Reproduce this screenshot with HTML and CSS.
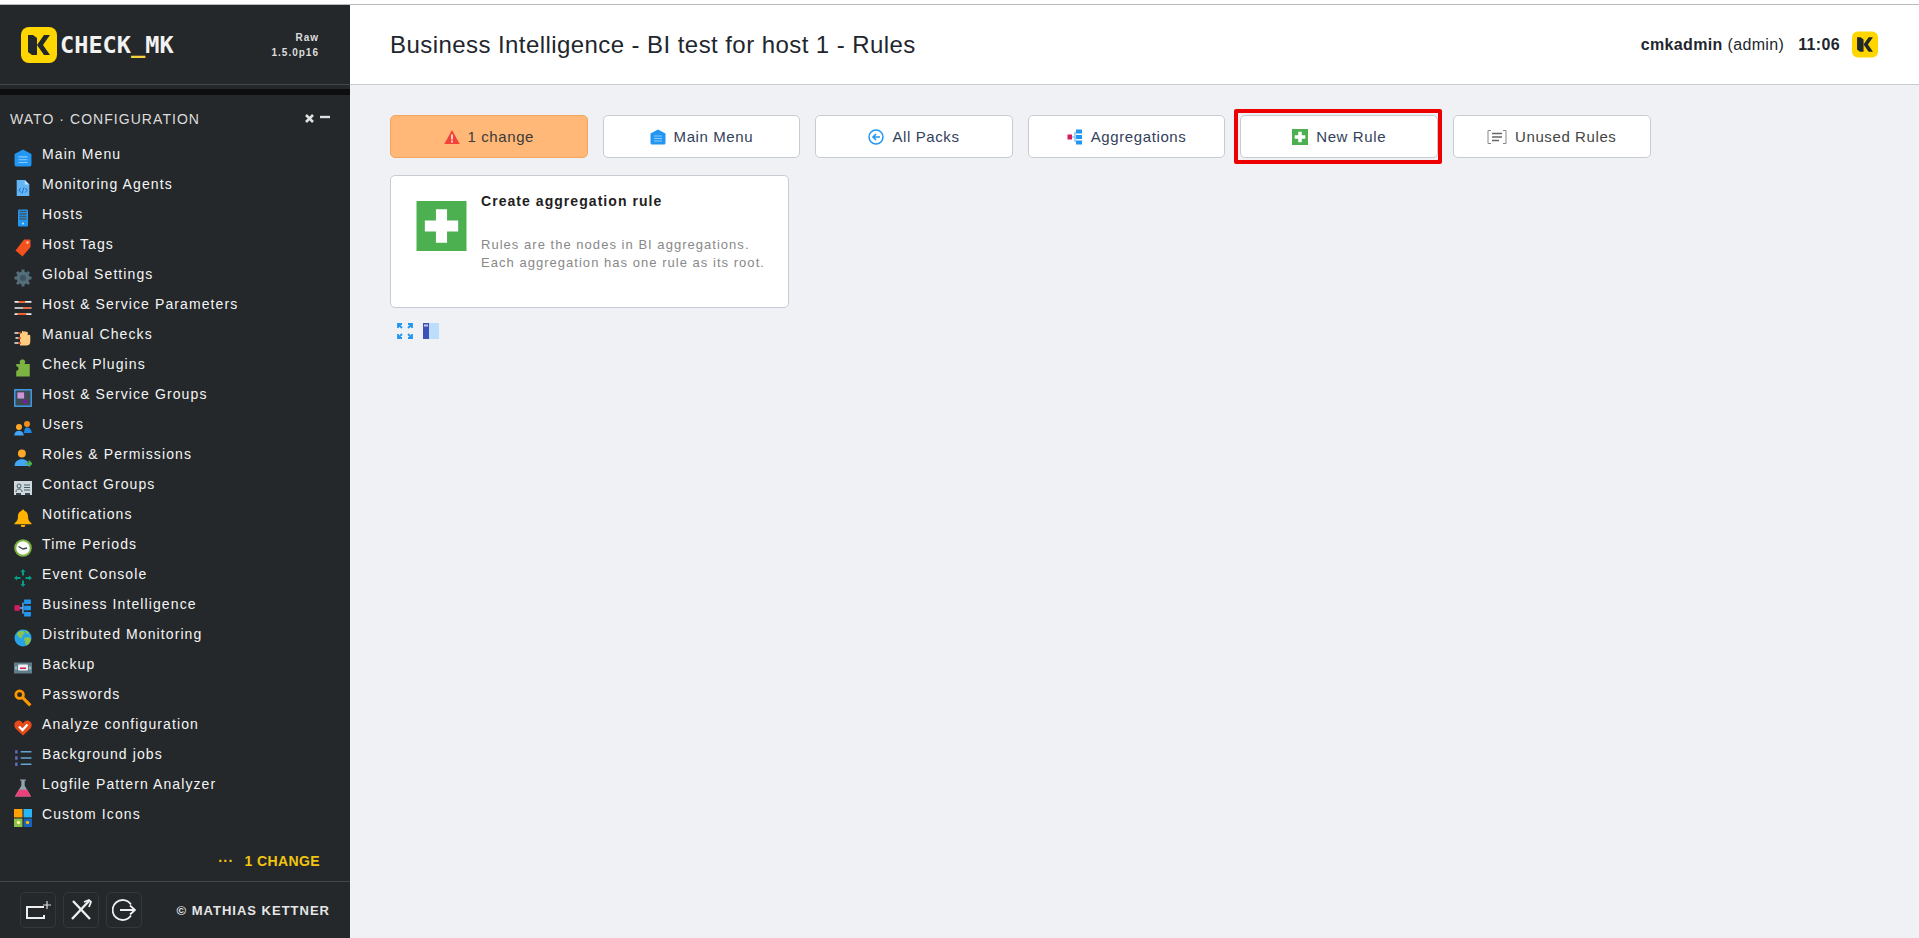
FILE: index.html
```html
<!DOCTYPE html>
<html lang="en">
<head>
    <meta charset="UTF-8">
    <title>Business Intelligence - BI test for host 1 - Rules</title>
    <link rel="stylesheet" href="styles.css">
</head>
<body>
    <svg class="sprite" xmlns="http://www.w3.org/2000/svg">
        <symbol id="i-logo" viewBox="0 0 36 36">
            <rect width="36" height="36" rx="8" fill="#ffd600"/>
            <path d="M7 8h5l4 3v17h-5l-4-3z" fill="#23282a"/>
            <path d="M29 8h-6l-7 10 7 10h6l-7-10z" fill="#23282a"/>
        </symbol>
        <symbol id="i-home" viewBox="0 0 16 16">
            <path d="M8 0.500L15.500 4.500V14a1.500 1.500 0 0 1-1.500 1.500H2A1.500 1.500 0 0 1 .5 14V4.500z" fill="#2196f3"/>
            <path d="M4 7h8M4 9.500h8M4 12h8" stroke="#90caf9" stroke-width="1"/>
        </symbol>
        <symbol id="i-agents" viewBox="0 0 16 20">
            <path d="M1 1h9l5 5v13H1z" fill="#64b5f6"/>
            <path d="M10 1l5 5h-5z" fill="#bbdefb"/>
            <path d="M5.500 10L3.500 12.500L5.500 15M10.500 10l2 2.500l-2 2.500M9 9.500l-2 6.500" stroke="#1565c0" fill="none"/>
        </symbol>
        <symbol id="i-host" viewBox="0 0 12 18">
            <rect x="1" y="0.500" width="10" height="17" rx="1" fill="#2196f3"/>
            <path d="M2.500 2.500h7M2.500 5h7M2.500 7.500h7M2.500 10h7" stroke="#455a64" stroke-width="1.400"/>
            <circle cx="6" cy="14.500" r="0.900" fill="#e3f2fd"/>
        </symbol>
        <symbol id="i-tag" viewBox="0 0 16 18">
            <path d="M9 0.500h5.500a1 1 0 0 1 1 1V8L7.500 17.500 0.500 11.500z" fill="#f4511e"/>
            <circle cx="12.500" cy="3.500" r="1.200" fill="#ffccbc"/>
        </symbol>
        <symbol id="i-gear" viewBox="0 0 18 18">
            <path d="M9 4.500a4.500 4.500 0 1 0 0 9a4.500 4.500 0 1 0 0-9z" fill="none" stroke="#546e7a" stroke-width="4"/>
            <path d="M9 0.500v17M0.500 9h17M3 3l12 12M15 3L3 15" stroke="#546e7a" stroke-width="3"/>
            <circle cx="9" cy="9" r="3" fill="#3e5560"/>
        </symbol>
        <symbol id="i-params" viewBox="0 0 16 16">
            <path d="M0.500 2.500h15M0.500 8h15M0.500 13.500h15" stroke="#eceff1" stroke-width="1.500"/>
            <path d="M4 2.500h6M8 8h7M3 13.500h8" stroke="#f4511e" stroke-width="1.500"/>
        </symbol>
        <symbol id="i-hand" viewBox="0 0 18 16">
            <path d="M6 15.500V3.500a1 1 0 0 1 1.800 0V2a1 1 0 0 1 2 0a1 1 0 0 1 2 0.500a1 1 0 0 1 2 0.500v3a1.200 1.200 0 0 1 2.500 0v5.500c0 3-1.800 4-4 4z" fill="#ffcc80"/>
            <path d="M0.500 3h5M1.500 8h4M0.500 13h5" stroke="#eceff1" stroke-width="1.500"/>
            <path d="M4 3h3M4 8h3M4 13h3" stroke="#e64a19" stroke-width="1.500"/>
        </symbol>
        <symbol id="i-plugin" viewBox="0 0 14 16">
            <path d="M1 15.500V10.500a2 2 0 0 0 0-4V4.500h3.700C3.500 3 4 0.500 6.500 0.500S9.500 3 8.300 4.500H13v11z" fill="#7cb342"/>
        </symbol>
        <symbol id="i-groups" viewBox="0 0 16 16">
            <rect x="0.700" y="0.700" width="14.600" height="14.600" fill="#3d4a52" stroke="#42a5f5" stroke-width="1.200"/>
            <rect x="3" y="3" width="6" height="5.500" fill="#ce93d8"/>
            <path d="M7 12.500L10 8.500l3 4z" fill="#7b1fa2"/>
        </symbol>
        <symbol id="i-users" viewBox="0 0 18 15">
            <circle cx="5" cy="6.500" r="3" fill="#ffa726"/>
            <path d="M0.300 15c0-3 2-4.800 4.700-4.800S9.700 12 9.700 15z" fill="#42a5f5"/>
            <circle cx="13" cy="3.500" r="3" fill="#ef8f1e"/>
            <path d="M10 12.500c.2-3.500 1-5.500 3-5.500s4.700 2 4.700 5.500z" fill="#1e88e5"/>
        </symbol>
        <symbol id="i-roles" viewBox="0 0 16 16">
            <circle cx="7" cy="4" r="3.500" fill="#ffa726"/>
            <path d="M0.500 15c0-4 3-6 6.500-6s6.500 2 6.500 6z" fill="#42a5f5"/>
            <path d="M10 13h5.500M13 10.500l2.500 2.500-2.500 2.500" stroke="#4caf50" stroke-width="1.600" fill="none"/>
        </symbol>
        <symbol id="i-contact" viewBox="0 0 18 14">
            <rect width="18" height="14" fill="#cfd8dc"/>
            <circle cx="5" cy="5" r="2" fill="none" stroke="#455a64"/>
            <path d="M2 11c0-2 1-3 3-3s3 1 3 3M10 4h6M10 6.500h6M10 9h6" stroke="#455a64" fill="none"/>
            <path d="M2 14v-2h5v2zM11 14v-2h5v2z" fill="#37474f"/>
        </symbol>
        <symbol id="i-bell" viewBox="0 0 16 16">
            <path d="M8 0.500a1.500 1.500 0 0 1 1.200 1C12 2.500 12.500 5 12.500 7c0 2.500 1 4 3 5.500v1H0.500v-1c2-1.500 3-3 3-5.500 0-2 .5-4.500 3.300-5.500A1.500 1.500 0 0 1 8 0.500z" fill="#ffb300"/>
            <path d="M6 14.200h4a2 2 0 0 1-4 0z" fill="#ffb300"/>
        </symbol>
        <symbol id="i-clock" viewBox="0 0 18 18">
            <circle cx="9" cy="9" r="7.800" fill="#fafafa" stroke="#7cb342" stroke-width="2"/>
            <path d="M4.500 7.500L9 10l4-1" stroke="#37474f" stroke-width="1.400" fill="none"/>
        </symbol>
        <symbol id="i-event" viewBox="0 0 18 18">
            <path d="M9 0l2.500 3H10v3.500H8V3H6.500zM9 18l2.500-3H10v-3.500H8V15H6.500zM0 9l3-2.500V8h3.500v2H3v1.500zM18 9l-3-2.500V8h-3.500v2H15v1.500z" fill="#00a08a"/>
        </symbol>
        <symbol id="i-bi" viewBox="0 0 16 16">
            <rect x="0.500" y="5.500" width="4.500" height="5" fill="#d81b60"/>
            <path d="M5 8h3M8 3v10" stroke="#64b5f6" stroke-width="1.200"/>
            <path d="M9 0.500h6v4h-6zM9 6h6v4h-6zM9 11.500h6v4h-6z" fill="#2196f3"/>
        </symbol>
        <symbol id="i-globe" viewBox="0 0 18 18">
            <circle cx="9" cy="9" r="8.500" fill="#29a3e8"/>
            <path d="M4 3l5-1.500 2 2-2.500 3-1 3-2-1-2.500-3zM10 9l5-1 2 2.500-2 4.500-3 1.500-1-4zM11 1.500l3 1 1 2-2 .5z" fill="#8bc34a"/>
        </symbol>
        <symbol id="i-backup" viewBox="0 0 18 11">
            <rect width="18" height="11" fill="#607d8b"/>
            <rect x="4" y="2" width="10" height="6" rx="1" fill="#eceff1"/>
            <rect x="6" y="5" width="6" height="1.500" fill="#d81b60"/>
            <path d="M2 4v3M16 4v3" stroke="#eceff1"/>
        </symbol>
        <symbol id="i-key" viewBox="0 0 16 16">
            <circle cx="5" cy="5" r="3.400" fill="none" stroke="#ff9800" stroke-width="2.400"/>
            <path d="M7.500 7.500l7 7" stroke="#ff9800" stroke-width="2.800"/>
        </symbol>
        <symbol id="i-analyze" viewBox="0 0 18 16">
            <path d="M9 15.500L1.500 8.500C-.5 6 0 2 3 1c2.500-1 4.500 0 6 2.500C10.500 1 12.500 0 15 1c3 1 3.500 5 1.500 7.500z" fill="#e64a19"/>
            <path d="M5 6.500l3.500 3.500 5-5.500" stroke="#fff" stroke-width="2.400" fill="none"/>
        </symbol>
        <symbol id="i-jobs" viewBox="0 0 16 16">
            <path d="M1 1h2.200v3H1zM1 6.500h2.200v3H1zM1 12h2.200v3H1z" fill="#5c6bc0"/>
            <path d="M6 2.500h9.500M6 8h9.500M6 13.500h9.500" stroke="#64a5d6" stroke-width="1.400"/>
        </symbol>
        <symbol id="i-flask" viewBox="0 0 16 16">
            <path d="M5.500 0.500h5v1h-1v4.500l5.500 9v.5H1v-.5l5.500-9V1.500h-1z" fill="#90a4ae"/>
            <path d="M4.300 9.500h7.400l3.300 6H1z" fill="#ec407a"/>
        </symbol>
        <symbol id="i-custom" viewBox="0 0 16 16">
            <rect width="7.500" height="7.500" fill="#ffa000"/>
            <rect x="8.500" width="7.500" height="7.500" fill="#29b6f6"/>
            <rect y="8.500" width="7.500" height="7.500" fill="#8bc34a"/>
            <rect x="8.500" y="8.500" width="7.500" height="7.500" fill="#1565c0"/>
            <circle cx="4" cy="12" r="1.500" fill="#fff59d"/>
            <circle cx="12" cy="12" r="1.500" fill="#ffb300"/>
        </symbol>
        <symbol id="i-new" viewBox="0 0 18 18">
            <rect width="18" height="18" fill="#4caf50"/>
            <path d="M7 3h4v4h4v4h-4v4H7v-4H3V7h4z" fill="#fff"/>
        </symbol>
    </svg>

    <div class="topline"></div>
    <div class="layout">
        <aside class="sidebar">
            <div class="side-head">
                <div class="logo">
                    <svg class="logo-mark"><use href="#i-logo"/></svg>
                    <span class="logo-text">CHECK<i>_</i>MK</span>
                </div>
                <div class="version">Raw<br>1.5.0p16</div>
            </div>
            <div class="side-bar-dark"></div>
            <div class="snapin">
                <div class="snapin-title">
                    <span>WATO · CONFIGURATION</span>
                    <span class="snapin-ctrl">
                        <svg width="12" height="10" viewBox="0 0 12 10"><path d="M2 1l7 7M9 1L2 8" stroke="#e0e0e0" stroke-width="2.600"/></svg>
                        <svg width="12" height="10" viewBox="0 0 12 10"><path d="M1 3h10" stroke="#e0e0e0" stroke-width="2.400"/></svg>
                    </span>
                </div>
                <ul class="menu">
                    <li><svg class="mi"><use href="#i-home"/></svg>Main Menu</li>
                    <li><svg class="mi"><use href="#i-agents"/></svg>Monitoring Agents</li>
                    <li><svg class="mi"><use href="#i-host"/></svg>Hosts</li>
                    <li><svg class="mi"><use href="#i-tag"/></svg>Host Tags</li>
                    <li><svg class="mi"><use href="#i-gear"/></svg>Global Settings</li>
                    <li><svg class="mi"><use href="#i-params"/></svg>Host &amp; Service Parameters</li>
                    <li><svg class="mi"><use href="#i-hand"/></svg>Manual Checks</li>
                    <li><svg class="mi"><use href="#i-plugin"/></svg>Check Plugins</li>
                    <li><svg class="mi"><use href="#i-groups"/></svg>Host &amp; Service Groups</li>
                    <li><svg class="mi"><use href="#i-users"/></svg>Users</li>
                    <li><svg class="mi"><use href="#i-roles"/></svg>Roles &amp; Permissions</li>
                    <li><svg class="mi"><use href="#i-contact"/></svg>Contact Groups</li>
                    <li><svg class="mi"><use href="#i-bell"/></svg>Notifications</li>
                    <li><svg class="mi"><use href="#i-clock"/></svg>Time Periods</li>
                    <li><svg class="mi"><use href="#i-event"/></svg>Event Console</li>
                    <li><svg class="mi"><use href="#i-bi"/></svg>Business Intelligence</li>
                    <li><svg class="mi"><use href="#i-globe"/></svg>Distributed Monitoring</li>
                    <li><svg class="mi"><use href="#i-backup"/></svg>Backup</li>
                    <li><svg class="mi"><use href="#i-key"/></svg>Passwords</li>
                    <li><svg class="mi"><use href="#i-analyze"/></svg>Analyze configuration</li>
                    <li><svg class="mi"><use href="#i-jobs"/></svg>Background jobs</li>
                    <li><svg class="mi"><use href="#i-flask"/></svg>Logfile Pattern Analyzer</li>
                    <li><svg class="mi"><use href="#i-custom"/></svg>Custom Icons</li>
                </ul>
            </div>
            <div class="side-changes"><span class="dots">···</span>1 CHANGE</div>
            <div class="side-foot">
                <div class="foot-btns">
                    <a class="foot-btn">
                        <svg width="26" height="22" viewBox="0 0 26 22"><path d="M19 8H2v11h17v-3" stroke="#eee" stroke-width="2" fill="none"/><path d="M22 2v8M18 6h8" stroke="#ddd" stroke-width="1.200"/></svg>
                    </a>
                    <a class="foot-btn">
                        <svg width="24" height="24" viewBox="0 0 24 24"><path d="M4 3l17 18M20 3L3 21" stroke="#eee" stroke-width="2.400"/><path d="M15 4l5-2 2 2-2 5" stroke="#eee" stroke-width="1.800" fill="none"/></svg>
                    </a>
                    <a class="foot-btn">
                        <svg width="24" height="24" viewBox="0 0 24 24"><path d="M19 6.500A10 10 0 1 0 19 17.500" stroke="#eee" stroke-width="1.800" fill="none"/><path d="M8 12h15M18 7.500l5 4.500-5 4.500" stroke="#eee" stroke-width="1.800" fill="none"/></svg>
                    </a>
                </div>
                <span class="copyright">© MATHIAS KETTNER</span>
            </div>
        </aside>

        <main class="main">
            <header class="page-head">
                <h1>Business Intelligence - BI test for host 1 - Rules</h1>
                <div class="head-right">
                    <span class="user"><b>cmkadmin</b> (admin)</span>
                    <b class="clock">11:06</b>
                    <svg class="head-logo"><use href="#i-logo"/></svg>
                </div>
            </header>
            <div class="content">
                <div class="buttons">
                    <a class="btn btn-warn">
                        <svg class="bi" viewBox="0 0 16 15"><path d="M8 0.500L15.700 14.500H.3z" fill="#f44336"/><path d="M8 5v5M8 11v2" stroke="#fff" stroke-width="1.500"/></svg>
                        1 change
                    </a>
                    <a class="btn"><svg class="bi"><use href="#i-home"/></svg>Main Menu</a>
                    <a class="btn">
                        <svg class="bi" viewBox="0 0 16 16"><circle cx="8" cy="8" r="7" fill="#fff" stroke="#2196f3" stroke-width="1.500"/><path d="M12 8H5M8 5L5 8l3 3" stroke="#2196f3" stroke-width="1.600" fill="none"/></svg>
                        All Packs
                    </a>
                    <a class="btn"><svg class="bi"><use href="#i-bi"/></svg>Aggregations</a>
                    <a class="btn btn-marked"><svg class="bi"><use href="#i-new"/></svg>New Rule</a>
                    <a class="btn btn-grey">
                        <svg class="bi bi-wide" viewBox="0 0 20 16"><path d="M4 1.500H1v13h3M16 1.500h3v13h-3" stroke="#888" fill="none"/><path d="M5 4.500h10M5 8h10M5 11.500h7" stroke="#666" stroke-width="1.400"/></svg>
                        Unused Rules
                    </a>
                </div>
                <div class="card">
                    <svg class="card-icon"><use href="#i-new"/></svg>
                    <div class="card-body">
                        <div class="card-title">Create aggregation rule</div>
                        <p class="card-text">Rules are the nodes in BI aggregations.<br>Each aggregation has one rule as its root.</p>
                    </div>
                </div>
                <div class="tools">
                    <svg width="16" height="16" viewBox="0 0 16 16"><path d="M1 5V1h4M15 5V1h-4M1 11v4h4M15 11v4h-4M1 1l4 4M15 1l-4 4M1 15l4-4M15 15l-4-4" stroke="#2196f3" stroke-width="1.800" fill="none"/></svg>
                    <svg width="16" height="16" viewBox="0 0 16 16"><rect width="16" height="16" fill="#bbdefb"/><rect width="6" height="16" fill="#3f51b5"/><rect x="1" y="1.500" width="4" height="2" fill="#c5cae9"/></svg>
                </div>
            </div>
        </main>
    </div>
</body>
</html>
```

FILE: styles.css
```css
html, body {
    margin: 0;
    padding: 0;
    height: 100%;
    overflow: hidden;
}

body {
    font-family: "Liberation Sans", Arial, sans-serif;
    background-color: #f0f1f4;
    color: #1e262e;
}

.sprite {
    display: none;
}

.topline {
    height: 4px;
    background-color: #fff;
    border-bottom: 1px solid #bbb;
}

.layout {
    display: flex;
    height: 933px;
}

/* sidebar */
.sidebar {
    width: 350px;
    flex-shrink: 0;
    display: flex;
    flex-direction: column;
    background-color: #24282a;
    color: #fff;
}

.side-head {
    height: 79px;
    display: flex;
    align-items: center;
    justify-content: space-between;
    padding: 0 31px 0 21px;
    border-bottom: 1px solid #44484a;
}

.logo {
    display: flex;
    align-items: center;
    gap: 3px;
}

.logo-mark {
    width: 36px;
    height: 36px;
}

.logo-text {
    font-family: "DejaVu Sans Mono", monospace;
    font-size: 23.600px;
    font-weight: bold;
    color: #f2f2f2;
}

.logo-text i {
    font-style: normal;
    color: #f5d33a;
}

.version {
    font-size: 10px;
    font-weight: bold;
    letter-spacing: 1px;
    line-height: 15px;
    text-align: right;
    color: #ddd;
}

.side-bar-dark {
    height: 6px;
    margin-top: 4px;
    background-color: #0c0e0f;
}

.snapin {
    flex: 1;
}

.snapin-title {
    display: flex;
    justify-content: space-between;
    align-items: center;
    padding: 16px 19px 0 10px;
    font-size: 14px;
    letter-spacing: 1.050px;
    color: #dcdcdc;
}

.snapin-ctrl {
    display: flex;
    gap: 3px;
}

.menu {
    list-style: none;
    margin: 12px 0 0;
    padding: 0;
}

.menu li {
    height: 30px;
    display: flex;
    align-items: center;
    font-size: 14px;
    letter-spacing: 1.100px;
    color: #f5f5f5;
}

.mi {
    width: 18px;
    height: 18px;
    margin: 8px 10px 0 14px;
    flex-shrink: 0;
}

.side-changes {
    padding-right: 30px;
    margin-bottom: 12px;
    text-align: right;
    font-size: 14px;
    font-weight: bold;
    letter-spacing: 0.400px;
    color: #f1c40f;
}

.dots {
    margin-right: 11px;
}

.side-foot {
    height: 56px;
    display: flex;
    align-items: center;
    justify-content: space-between;
    padding: 0 20px;
    border-top: 1px solid #44484a;
}

.foot-btns {
    display: flex;
    gap: 7px;
}

.foot-btn {
    width: 34px;
    height: 34px;
    display: flex;
    align-items: center;
    justify-content: center;
    border: 1px solid #33383a;
    border-radius: 5px;
}

.copyright {
    font-size: 13px;
    font-weight: bold;
    letter-spacing: 1px;
    color: #e6e6e6;
}

/* main */
.main {
    flex: 1;
    display: flex;
    flex-direction: column;
}

.page-head {
    height: 79px;
    display: flex;
    align-items: center;
    justify-content: space-between;
    padding: 0 41px 0 40px;
    background-color: #fff;
    border-bottom: 1px solid #c9cbd4;
}

h1 {
    margin: 0;
    font-size: 24px;
    font-weight: normal;
    letter-spacing: 0.430px;
    color: #1e262e;
}

.head-right {
    display: flex;
    align-items: center;
    font-size: 16px;
    letter-spacing: 0.350px;
}

.user {
    margin-right: 14px;
}

.head-logo {
    width: 26px;
    height: 27px;
    margin-left: 12px;
}

.content {
    padding: 30px 40px;
}

.buttons {
    display: flex;
    gap: 15px;
}

.btn {
    position: relative;
    width: 197.600px;
    height: 43px;
    box-sizing: border-box;
    display: flex;
    align-items: center;
    justify-content: center;
    gap: 8px;
    background-color: #fff;
    border: 1px solid #c9cbd4;
    border-radius: 5px;
    font-size: 15px;
    letter-spacing: 0.600px;
    color: #33405a;
}

.btn-warn {
    background-color: #ffb877;
    border-color: #f4a560;
    color: #3a3a3a;
}

.btn-grey {
    color: #444;
}

.btn-marked::after {
    content: "";
    position: absolute;
    top: -7px;
    left: -7px;
    right: -5px;
    bottom: -7px;
    border: 4px solid #ee0000;
    border-radius: 2px;
}

.bi {
    width: 16px;
    height: 16px;
    flex-shrink: 0;
}

.bi-wide {
    width: 20px;
}

.card {
    width: 399px;
    height: 133px;
    box-sizing: border-box;
    margin-top: 17px;
    padding: 25px 25px;
    display: flex;
    gap: 14px;
    background-color: #fff;
    border: 1px solid #c9cbd4;
    border-radius: 5px;
}

.card-icon {
    width: 51px;
    height: 50px;
    flex-shrink: 0;
}

.card-title {
    margin-top: -8px;
    font-size: 14px;
    font-weight: bold;
    letter-spacing: 1.050px;
    color: #1e1e1e;
}

.card-text {
    margin: 27px 0 0;
    font-size: 13px;
    line-height: 18px;
    letter-spacing: 1.030px;
    white-space: nowrap;
    color: #888;
}

.tools {
    display: flex;
    gap: 10px;
    margin-top: 15px;
    padding-left: 7px;
}
```
